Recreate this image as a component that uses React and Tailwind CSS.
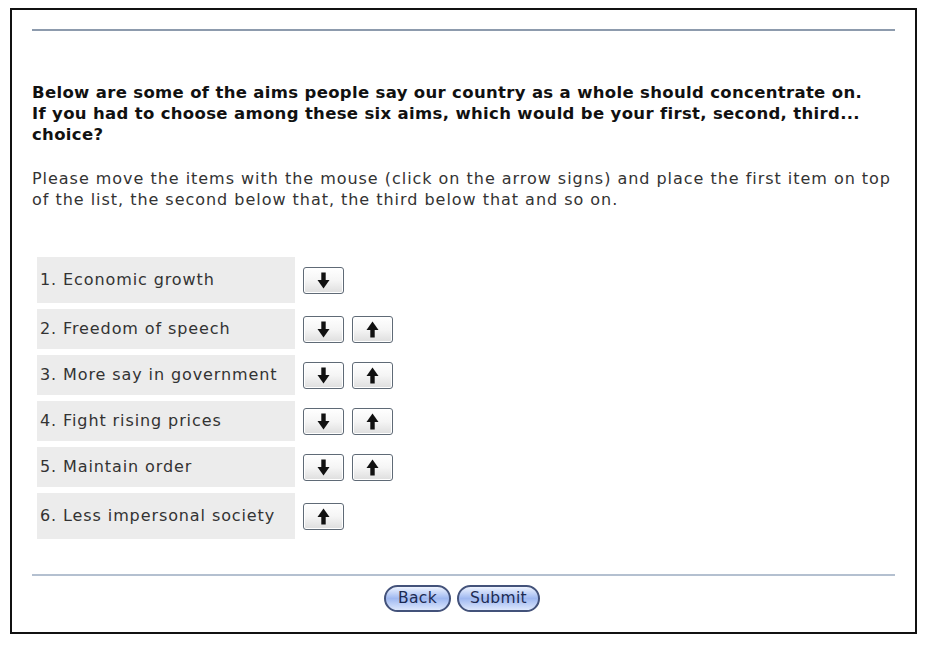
import React from 'react';

const items = [
  { label: '1. Economic growth', down: true, up: false, h: 'h-[46px]' },
  { label: '2. Freedom of speech', down: true, up: true, h: 'h-[40px]' },
  { label: '3. More say in government', down: true, up: true, h: 'h-[40px]' },
  { label: '4. Fight rising prices', down: true, up: true, h: 'h-[40px]' },
  { label: '5. Maintain order', down: true, up: true, h: 'h-[40px]' },
  { label: '6. Less impersonal society', down: false, up: true, h: 'h-[46px]' },
];

const Arrow = ({ dir }) => (
  <svg width="13" height="17" viewBox="0 0 13 17" className={dir === 'up' ? 'rotate-180' : ''}>
    <rect x="4.3" y="0.5" width="4.4" height="8.5" fill="#111" />
    <path d="M0.5 8 L12.5 8 L6.5 16.5 Z" fill="#111" />
  </svg>
);

const ArrowButton = ({ dir }) => (
  <button
    type="button"
    className="w-[41px] h-[27px] flex items-center justify-center rounded-[3px] border border-[#5f6a76] bg-gradient-to-b from-white via-[#f5f5f5] to-[#dedede] shadow-[inset_0_0_0_1px_#ffffff]"
  >
    <Arrow dir={dir} />
  </button>
);

const PillButton = ({ children, w }) => (
  <button
    type="button"
    className={`${w} h-[27px] rounded-full border-2 border-[#43527a] bg-gradient-to-b from-[#eef3fe] via-[#9fb8f0] to-[#dde7fc] text-[15.5px] tracking-[0.3px] text-[#1c2a52] leading-none flex items-center justify-center`}
  >
    {children}
  </button>
);

export default function App() {
  return (
    <div className="w-[927px] h-[645px] bg-white pt-[8px] pl-[10px] font-['DejaVu_Sans',Verdana,sans-serif]">
      <div className="w-[907px] h-[626px] border-2 border-[#111] px-[20px] pt-[19px] flex flex-col">
        <div className="h-[2px] bg-[#8d9bad]" />

        <div className="mt-[51px] text-[16.5px] tracking-[0.33px] font-bold leading-[21px] text-[#111] whitespace-nowrap">
          Below are some of the aims people say our country as a whole should concentrate on.
          <br />
          If you had to choose among these six aims, which would be your first, second, third...
          <br />
          choice?
        </div>

        <p className="mt-[23px] text-[16px] tracking-[0.97px] leading-[21px] text-[#333] whitespace-nowrap">
          Please move the items with the mouse (click on the arrow signs) and place the first item on top
          <br />
          of the list, the second below that, the third below that and so on.
        </p>

        <div className="mt-[47px] ml-[5px] flex flex-col gap-[6px]">
          {items.map((it) => (
            <div key={it.label} className={`flex items-center ${it.h}`}>
              <div className="w-[258px] h-full bg-[#ececec] pl-[3px] flex items-center text-[16px] tracking-[0.9px] text-[#333] whitespace-nowrap">
                {it.label}
              </div>
              <div className="ml-[8px] flex gap-[8px]">
                {it.down && <ArrowButton dir="down" />}
                {it.up && <ArrowButton dir="up" />}
              </div>
            </div>
          ))}
        </div>

        <div className="mt-[35px] h-[2px] bg-[#b4c0d0]" />

        <div className="mt-[9px] flex justify-center gap-[6px] pr-[3px]">
          <PillButton w="w-[67px]">Back</PillButton>
          <PillButton w="w-[83px]">Submit</PillButton>
        </div>
      </div>
    </div>
  );
}
